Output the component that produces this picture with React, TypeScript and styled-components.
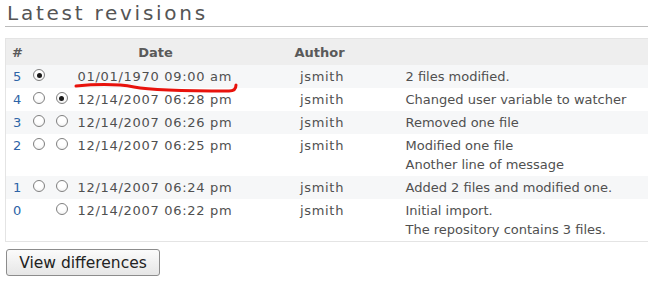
import React from 'react';
import styled, { createGlobalStyle } from 'styled-components';

const GlobalStyle = createGlobalStyle`
  html, body {
    margin: 0;
    padding: 0;
    background: #fff;
    overflow: hidden;
  }
  body {
    font-family: "DejaVu Sans", Verdana, sans-serif;
    font-size: 13px;
    color: #505050;
  }
`;

type Revision = {
  id: number;
  date: string;
  author: string;
  message: string[];
  from: boolean | null;
  to: boolean | null;
};

const revisions: Revision[] = [
  { id: 5, date: '01/01/1970 09:00 am', author: 'jsmith', message: ['2 files modified.'], from: true, to: null },
  { id: 4, date: '12/14/2007 06:28 pm', author: 'jsmith', message: ['Changed user variable to watcher'], from: false, to: true },
  { id: 3, date: '12/14/2007 06:26 pm', author: 'jsmith', message: ['Removed one file'], from: false, to: false },
  { id: 2, date: '12/14/2007 06:25 pm', author: 'jsmith', message: ['Modified one file', 'Another line of message'], from: false, to: false },
  { id: 1, date: '12/14/2007 06:24 pm', author: 'jsmith', message: ['Added 2 files and modified one.'], from: false, to: false },
  { id: 0, date: '12/14/2007 06:22 pm', author: 'jsmith', message: ['Initial import.', 'The repository contains 3 files.'], from: null, to: false },
];

const Page = styled.div`
  position: relative;
  width: 660px;
  padding: 0 0 0 5px;
`;

const Title = styled.h2`
  margin: 0 0 11px 0;
  padding: 2px 0 2px 2px;
  height: 22px;
  font-size: 20px;
  font-weight: normal;
  line-height: 22px;
  letter-spacing: 2.75px;
  color: #555;
  border-bottom: 1px solid #bbb;
`;

const Table = styled.table`
  width: 100%;
  table-layout: fixed;
  border-collapse: collapse;
  border: 1px solid #e4e4e4;
  border-right: none;
`;

const HeadCell = styled.th<{ $align?: string }>`
  background: #eee;
  height: 26px;
  padding: 0 6px;
  font-weight: bold;
  color: #5a5a5a;
  text-align: ${(p) => p.$align || 'center'};
  vertical-align: middle;
`;

const Row = styled.tr<{ $odd: boolean }>`
  background: ${(p) => (p.$odd ? '#f6f7f8' : '#fff')};
`;

const Cell = styled.td<{ $align?: string; $spaced?: boolean }>`
  padding: 2px 0 2px 5px;
  line-height: 19px;
  vertical-align: top;
  text-align: ${(p) => p.$align || 'left'};
  letter-spacing: ${(p) => (p.$spaced ? '0.7px' : 'normal')};
  white-space: nowrap;
`;

const IdLink = styled.a`
  color: #2d64a6;
  text-decoration: none;
  padding-left: 2px;
`;

const RadioCell = styled.td`
  padding: 4px 0 0 0;
  vertical-align: top;
  text-align: center;
`;

const Radio = styled.span<{ $checked: boolean }>`
  display: inline-block;
  position: relative;
  box-sizing: border-box;
  width: 12px;
  height: 12px;
  border-radius: 50%;
  border: 1px solid #808080;
  background: radial-gradient(circle at 50% 35%, #fff 40%, #ececec 100%);
  &::after {
    content: '';
    display: ${(p) => (p.$checked ? 'block' : 'none')};
    position: absolute;
    left: 2.5px;
    top: 2.5px;
    width: 5px;
    height: 5px;
    border-radius: 50%;
    background: #1a1a1a;
  }
`;

const Button = styled.button`
  margin: 7px 0 0 1px;
  width: 154px;
  height: 27px;
  padding: 0;
  font-family: "DejaVu Sans", Verdana, sans-serif;
  font-size: 15.5px;
  color: #222;
  background: linear-gradient(#fbfbfb, #e6e6e6);
  border: 1px solid #8c8c8c;
  border-radius: 3px;
`;

const Scribble = styled.svg`
  position: absolute;
  left: 0;
  top: 0;
  pointer-events: none;
`;

const RadioSlot = ({ value }: { value: boolean | null }) => (
  <RadioCell>{value !== null && <Radio $checked={value} />}</RadioCell>
);

export default function App() {
  return (
    <>
      <GlobalStyle />
      <Page>
        <Title>Latest revisions</Title>
        <Table>
          <colgroup>
            <col style={{ width: 22 }} />
            <col style={{ width: 23 }} />
            <col style={{ width: 22 }} />
            <col style={{ width: 166 }} />
            <col style={{ width: 162 }} />
            <col />
          </colgroup>
          <thead>
            <tr>
              <HeadCell $align="left">#</HeadCell>
              <HeadCell />
              <HeadCell />
              <HeadCell>Date</HeadCell>
              <HeadCell>Author</HeadCell>
              <HeadCell />
            </tr>
          </thead>
          <tbody>
            {revisions.map((r, i) => (
              <Row key={r.id} $odd={i % 2 === 0}>
                <Cell>
                  <IdLink href="#">{r.id}</IdLink>
                </Cell>
                <RadioSlot value={r.from} />
                <RadioSlot value={r.to} />
                <Cell $spaced>{r.date}</Cell>
                <Cell $align="center" $spaced>
                  {r.author}
                </Cell>
                <Cell>
                  {r.message.map((line) => (
                    <div key={line}>{line}</div>
                  ))}
                </Cell>
              </Row>
            ))}
          </tbody>
        </Table>
        <Button>View differences</Button>
        <Scribble width="648" height="285">
          <path
            d="M76 86 C 98 84, 118 84, 134 87 C 150 90, 200 91, 229 91 C 235 91, 236 88, 236 85"
            fill="none"
            stroke="#e8120c"
            strokeWidth="3"
            strokeLinecap="round"
          />
        </Scribble>
      </Page>
    </>
  );
}
